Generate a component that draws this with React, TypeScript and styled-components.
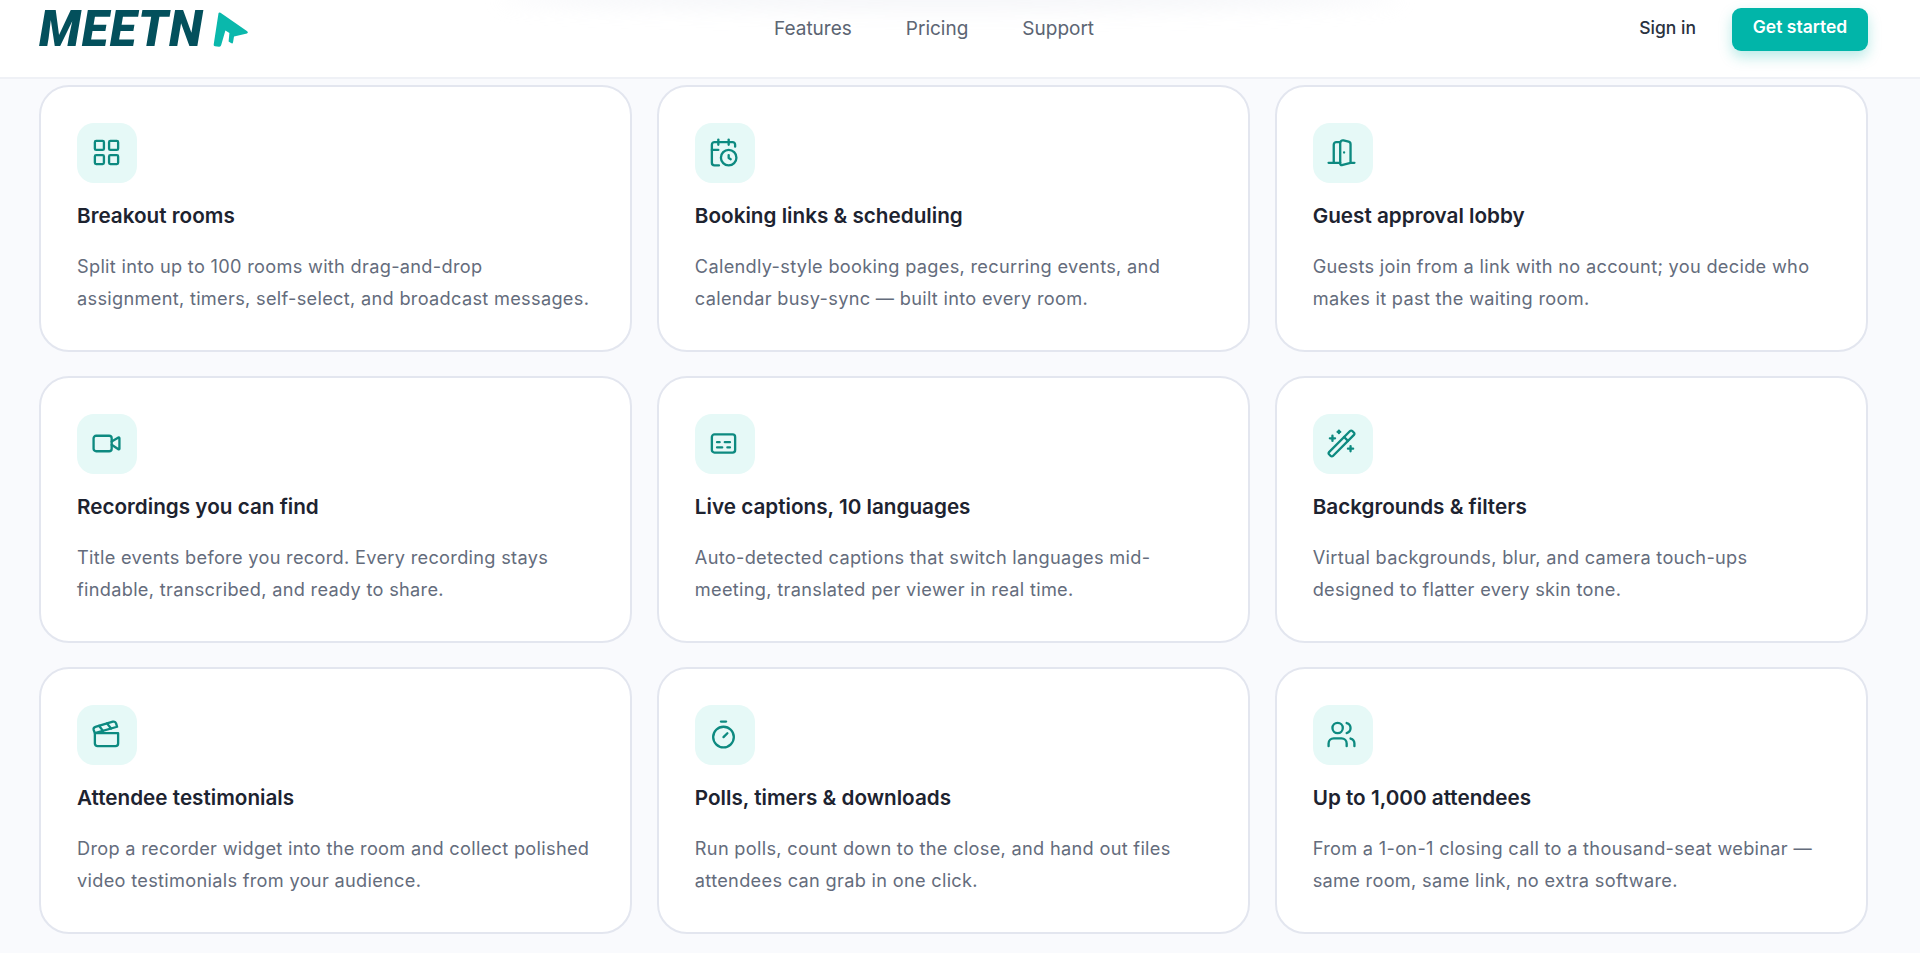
import React from 'react'
import styled, { createGlobalStyle } from 'styled-components'
import {
  CalendarClock,
  Captions,
  Clapperboard,
  DoorOpen,
  LayoutGrid,
  Timer,
  Users,
  Video,
  WandSparkles,
} from 'lucide-react'

const GlobalStyle = createGlobalStyle`
  html, body {
    margin: 0;
    height: 100%;
    overflow: hidden;
    background: #f9fafd;
  }
  * {
    box-sizing: border-box;
  }
  body {
    font-family: Inter, "Liberation Sans", sans-serif;
  }
`

const Page = styled.div`
  height: 953px;
  overflow: hidden;
`

const Header = styled.header`
  position: relative;
  display: grid;
  grid-template-columns: 735px auto 1fr;
  grid-template-rows: 43px;
  align-items: center;
  height: 79px;
  padding: 8px 52px 26px 39px;
  background: #ffffff;
  border-bottom: 2px solid #eff1f6;

  &::before {
    content: '';
    position: absolute;
    top: -14px;
    left: 500px;
    width: 900px;
    height: 24px;
    border-radius: 50%;
    background: rgba(226, 230, 238, 0.35);
    filter: blur(10px);
  }
`

const Logo = styled.a`
  position: relative;
  display: flex;
  align-items: center;
  gap: 9px;
`

const LogoText = styled.span`
  font-family: Roboto, sans-serif;
  font-style: italic;
  font-weight: 900;
  font-size: 49px;
  letter-spacing: 1.2px;
  color: #03505c;
`

const Nav = styled.nav`
  display: flex;
  gap: 54px;
  margin-top: -3px;
`

const NavLink = styled.a`
  font-size: 19px;
  color: #5b6472;
`

const Actions = styled.div`
  display: flex;
  justify-content: flex-end;
  align-items: center;
  gap: 36px;
`

const SignIn = styled.a`
  font-size: 17.5px;
  font-weight: 500;
  color: #2a3240;
  margin-top: -5px;
`

const GetStarted = styled.button`
  width: 136px;
  height: 43px;
  padding: 0 0 7px;
  border: 0;
  border-radius: 9px;
  background: #01b5a9;
  color: #ffffff;
  font-family: inherit;
  font-size: 17.5px;
  font-weight: 600;
  box-shadow: 0 6px 14px rgba(1, 181, 169, 0.28);
`

const Features = styled.main`
  display: grid;
  grid-template-columns: repeat(3, 1fr);
  gap: 24.5px;
  padding: 6px 52px 0 39px;
`

const Card = styled.article`
  padding: 36px 36px 35px;
  background: #ffffff;
  border: 2px solid #e3e6ef;
  border-radius: 30px;
`

const IconBox = styled.div`
  display: flex;
  align-items: center;
  justify-content: center;
  width: 60px;
  height: 60px;
  padding: 0 2px 2px 0;
  border-radius: 17px;
  background: #e6f9f7;
  color: #0d8a80;
`

const Title = styled.h3`
  margin: 20px 0 20.5px;
  font-size: 20.7px;
  line-height: 26px;
  font-weight: 600;
  color: #1d2330;
`

const Description = styled.p`
  margin: 0;
  font-size: 18.2px;
  letter-spacing: 0.3px;
  line-height: 32.5px;
  color: #646c7c;
`

const LogoMark = () => (
  <svg width="36" height="36" viewBox="0 0 36 36">
    <path
      d="M5.5 1.2 Q6 0 7.5 0.8 L34.2 19.2 Q35.8 20.6 34 21.4 L21 24.5 L20 30.5 Q19.6 32 18 31 L15.6 29.5 L16.4 21 L12.4 18.6 L8.2 33 Q7.8 35 6 34.8 L2 34.2 Q0.4 34 0.7 32.4 Z"
      fill="#0ab8ac"
    />
  </svg>
)

const features = [
  {
    icon: LayoutGrid,
    title: 'Breakout rooms',
    text: 'Split into up to 100 rooms with drag-and-drop assignment, timers, self-select, and broadcast messages.',
  },
  {
    icon: CalendarClock,
    title: 'Booking links & scheduling',
    text: 'Calendly-style booking pages, recurring events, and calendar busy-sync — built into every room.',
  },
  {
    icon: DoorOpen,
    title: 'Guest approval lobby',
    text: 'Guests join from a link with no account; you decide who makes it past the waiting room.',
  },
  {
    icon: Video,
    title: 'Recordings you can find',
    text: 'Title events before you record. Every recording stays findable, transcribed, and ready to share.',
  },
  {
    icon: Captions,
    title: 'Live captions, 10 languages',
    text: 'Auto-detected captions that switch languages mid-meeting, translated per viewer in real time.',
  },
  {
    icon: WandSparkles,
    title: 'Backgrounds & filters',
    text: 'Virtual backgrounds, blur, and camera touch-ups designed to flatter every skin tone.',
  },
  {
    icon: Clapperboard,
    title: 'Attendee testimonials',
    text: 'Drop a recorder widget into the room and collect polished video testimonials from your audience.',
  },
  {
    icon: Timer,
    title: 'Polls, timers & downloads',
    text: 'Run polls, count down to the close, and hand out files attendees can grab in one click.',
  },
  {
    icon: Users,
    title: 'Up to 1,000 attendees',
    text: 'From a 1-on-1 closing call to a thousand-seat webinar — same room, same link, no extra software.',
  },
]

const App: React.FC = () => {
  return (
    <Page>
      <GlobalStyle />
      <Header>
        <Logo>
          <LogoText>MEETN</LogoText>
          <LogoMark />
        </Logo>
        <Nav>
          <NavLink>Features</NavLink>
          <NavLink>Pricing</NavLink>
          <NavLink>Support</NavLink>
        </Nav>
        <Actions>
          <SignIn>Sign in</SignIn>
          <GetStarted>Get started</GetStarted>
        </Actions>
      </Header>
      <Features>
        {features.map((f) => (
          <Card key={f.title}>
            <IconBox>
              <f.icon size={31} strokeWidth={1.8} />
            </IconBox>
            <Title>{f.title}</Title>
            <Description>{f.text}</Description>
          </Card>
        ))}
      </Features>
    </Page>
  )
}

export default App
